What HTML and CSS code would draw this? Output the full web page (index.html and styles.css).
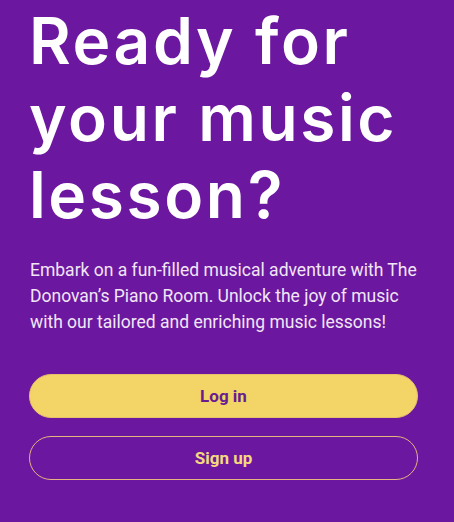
FILE: index.html
```html
<!DOCTYPE html>
<html lang="en">
<head>
<meta charset="utf-8">
<link rel="stylesheet" href="styles.css">
</head>
<body>
<main class="hero">
  <h1 class="title">Ready for your music lesson?</h1>
  <p class="lead">Embark on a fun-filled musical adventure with The Donovan’s Piano Room. Unlock the joy of music with our tailored and enriching music lessons!</p>
  <div class="actions">
    <button class="btn btn-primary">Log in</button>
    <button class="btn btn-outline">Sign up</button>
  </div>
</main>
</body>
</html>
```
FILE: styles.css
```css
html, body {
  margin: 0;
  padding: 0;
  background: #6c179f;
  height: 100%;
  overflow: hidden;
}
.hero {
  padding: 2px 36px 0 29px;
  display: flex;
  flex-direction: column;
}
.title {
  margin: 0;
  font-family: "Inter", sans-serif;
  font-weight: 600;
  font-size: 64px;
  line-height: 77px;
  color: #ffffff;
  letter-spacing: 2.6px;
}
.lead {
  margin: 24px 0 0 1px;
  font-family: Roboto, sans-serif;
  font-size: 17.5px;
  line-height: 26px;
  color: #f1e6f6;
}
.actions {
  margin-top: 39px;
  display: flex;
  flex-direction: column;
  gap: 18px;
}
.btn {
  height: 44px;
  border-radius: 22px;
  font-family: Roboto, sans-serif;
  font-weight: 700;
  font-size: 17px;
  cursor: pointer;
}
.btn-primary {
  background: #f3d567;
  color: #6a1b8f;
  border: 1px solid #e7c06a;
}
.btn-outline {
  background: transparent;
  color: #f5d97e;
  border: 1px solid #e6b47e;
}
```
